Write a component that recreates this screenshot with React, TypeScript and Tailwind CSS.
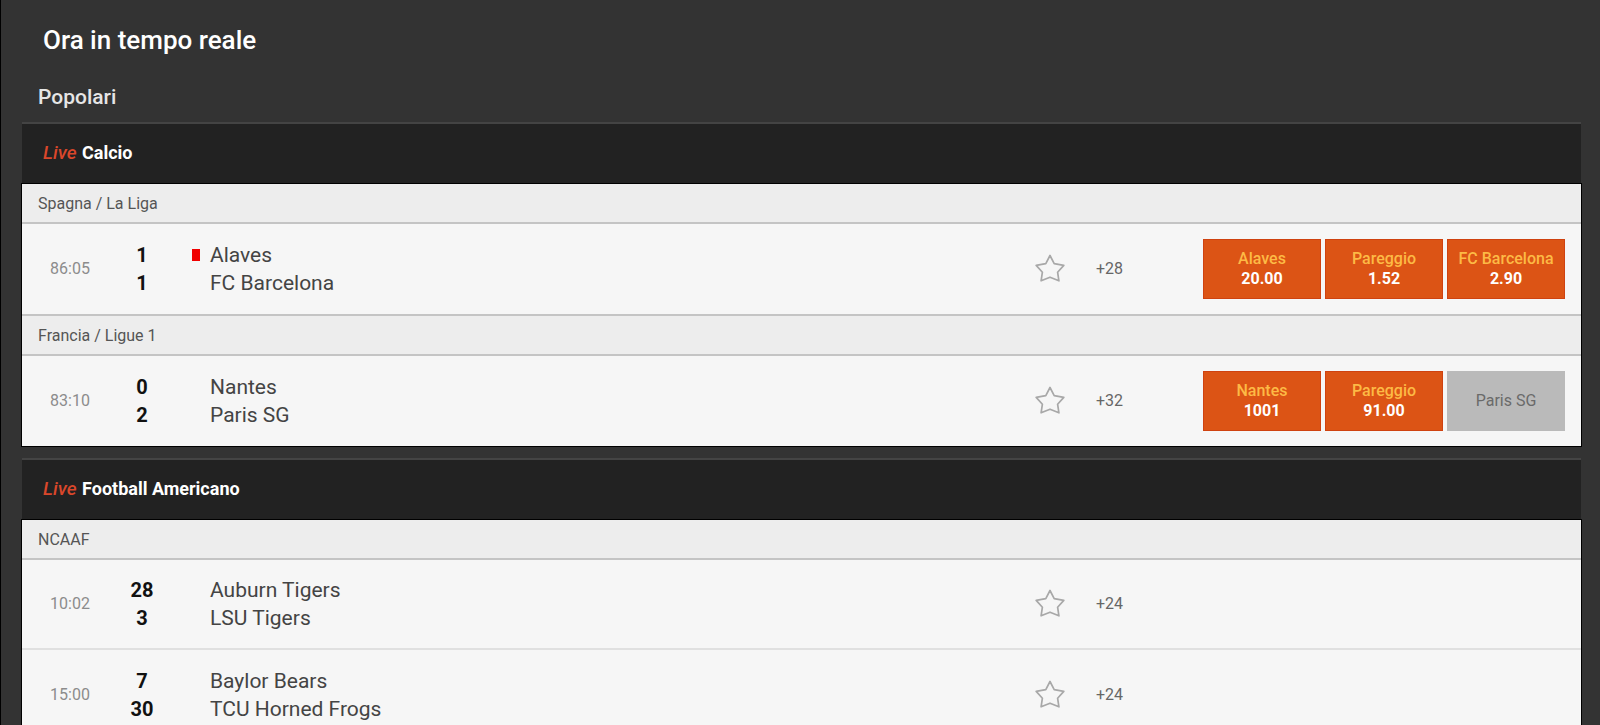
type Odd = {
  label: string;
  price?: string;
};

type Match = {
  time: string;
  home: string;
  away: string;
  homeScore: number;
  awayScore: number;
  homeRedCard?: boolean;
  markets: number;
  odds: Odd[];
};

type League = {
  name: string;
  matches: Match[];
};

type Sport = {
  name: string;
  leagues: League[];
};

const sports: Sport[] = [
  {
    name: "Calcio",
    leagues: [
      {
        name: "Spagna / La Liga",
        matches: [
          {
            time: "86:05",
            home: "Alaves",
            away: "FC Barcelona",
            homeScore: 1,
            awayScore: 1,
            homeRedCard: true,
            markets: 28,
            odds: [
              { label: "Alaves", price: "20.00" },
              { label: "Pareggio", price: "1.52" },
              { label: "FC Barcelona", price: "2.90" },
            ],
          },
        ],
      },
      {
        name: "Francia / Ligue 1",
        matches: [
          {
            time: "83:10",
            home: "Nantes",
            away: "Paris SG",
            homeScore: 0,
            awayScore: 2,
            markets: 32,
            odds: [
              { label: "Nantes", price: "1001" },
              { label: "Pareggio", price: "91.00" },
              { label: "Paris SG" },
            ],
          },
        ],
      },
    ],
  },
  {
    name: "Football Americano",
    leagues: [
      {
        name: "NCAAF",
        matches: [
          {
            time: "10:02",
            home: "Auburn Tigers",
            away: "LSU Tigers",
            homeScore: 28,
            awayScore: 3,
            markets: 24,
            odds: [],
          },
          {
            time: "15:00",
            home: "Baylor Bears",
            away: "TCU Horned Frogs",
            homeScore: 7,
            awayScore: 30,
            markets: 24,
            odds: [],
          },
        ],
      },
    ],
  },
];

function OddButton({ odd }: { odd: Odd }) {
  if (!odd.price) {
    return (
      <button
        disabled
        className="h-[60px] bg-[#bababa] text-base text-[#6a6a6a]"
      >
        {odd.label}
      </button>
    );
  }
  return (
    <button className="h-[60px] border border-[#cf4210] bg-[#dc5415] text-base leading-5 whitespace-nowrap">
      <span className="block font-medium text-[#fdba45]">{odd.label}</span>
      <span className="block font-bold text-white">{odd.price}</span>
    </button>
  );
}

function MatchRow({ match }: { match: Match }) {
  return (
    <li className="flex h-[90px] items-center border-b-2 border-[#e0e0e0] bg-[#f6f6f6] pr-4 last:border-b-0">
      <div className="w-24 text-center text-base text-[#8c8c8c]">
        {match.time}
      </div>
      <div className="w-12 text-center text-xl leading-7 font-bold text-[#111]">
        <div>{match.homeScore}</div>
        <div>{match.awayScore}</div>
      </div>
      <div className="flex-1 text-[21px] leading-7 text-[#444]">
        <div className="flex items-center">
          <div className="flex w-11 justify-end pr-2.5">
            {match.homeRedCard && (
              <span className="h-3 w-2 bg-[#f00000]"></span>
            )}
          </div>
          {match.home}
        </div>
        <div className="pl-11">{match.away}</div>
      </div>
      <button aria-label="Aggiungi ai preferiti" className="mr-[31px]">
        <svg
          className="h-[30px] w-[30px]"
          viewBox="0 0 30 30"
          fill="none"
          stroke="#a8a8a8"
          strokeWidth={1.7}
          strokeLinejoin="round"
        >
          <path d="M15 1.5 L19.2 9.6 L28.8 11.4 L22.6 18.2 L23.9 26.8 L15 23.2 L6.1 26.8 L7.4 18.2 L1.2 11.4 L10.8 9.6 Z" />
        </svg>
      </button>
      <a href="#" className="w-[107px] text-base text-[#666]">
        +{match.markets}
      </a>
      <div className="grid w-[362px] grid-cols-3 gap-1">
        {match.odds.map((odd) => (
          <OddButton key={odd.label} odd={odd} />
        ))}
      </div>
    </li>
  );
}

export default function App() {
  return (
    <main className="h-screen overflow-hidden border-l border-black bg-[#333] pr-[19px] pl-[21px] font-[Roboto,sans-serif]">
      <h1 className="pt-5 pl-[21px] text-[26px] leading-10 font-medium text-white">
        Ora in tempo reale
      </h1>
      <h2 className="pt-[22px] pb-[10px] pl-4 text-[21px] leading-[30px] font-medium text-[#e6e6e6]">
        Popolari
      </h2>

      {sports.map((sport) => (
        <section key={sport.name} className="mb-3">
          {/* Sport header */}
          <h3 className="h-[61px] border-t-2 border-[#444] bg-[#222] pl-[21px] text-[18px] leading-[58px] font-bold text-white">
            <span className="mr-px text-[19px] font-medium text-[#d9472b] italic">
              Live
            </span>{" "}
            {sport.name}
          </h3>

          <div className="mt-px ring-1 ring-black">
            {sport.leagues.map((league, idx) => (
              <div key={league.name}>
                <h4
                  className={`border-[#c4c4c4] bg-[#ededed] pt-0.5 pl-4 text-base leading-9 text-[#555] ${
                    idx > 0 ? "border-y-2" : "border-b-2"
                  }`}
                >
                  {league.name}
                </h4>
                <ul>
                  {league.matches.map((match) => (
                    <MatchRow key={match.home} match={match} />
                  ))}
                </ul>
              </div>
            ))}
          </div>
        </section>
      ))}
    </main>
  );
}
